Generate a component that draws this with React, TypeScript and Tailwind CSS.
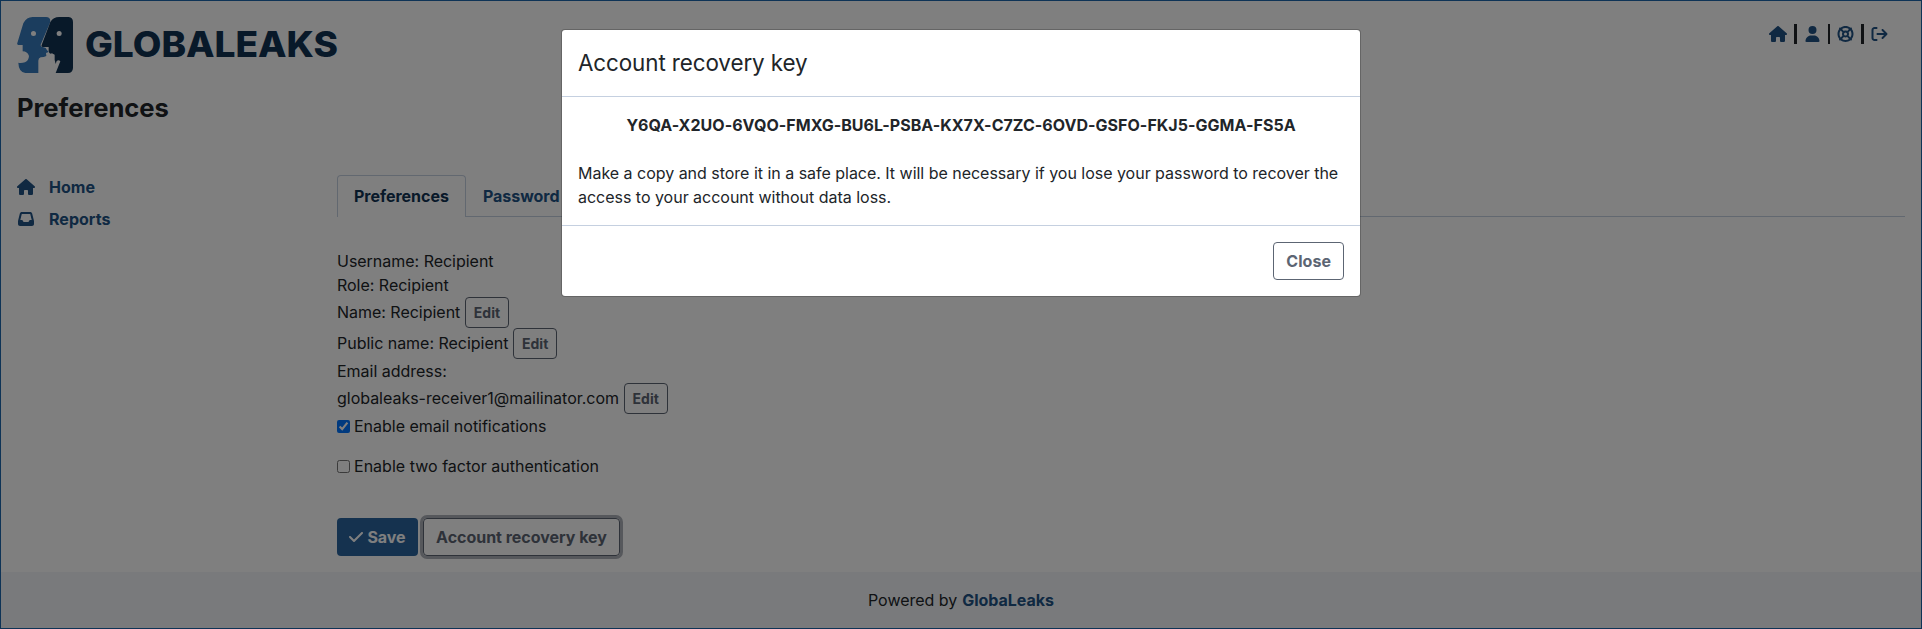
import { FaHouse, FaUser, FaLifeRing, FaArrowRightFromBracket, FaInbox, FaCheck } from "react-icons/fa6";

const link = "text-[#205285]";

function Logo() {
  return (
    <svg width="322" height="58" viewBox="0 0 322 58" className="block">
      <g transform="translate(-7 -7) scale(0.3333)">
        <path fill="#377abc" d="M40 40Q50 21 68 21H108Q124 22 120 38L92 104Q91 110 98 111L107 114Q110 120 116 126L108 129L109 138Q102 142 92 142Q85 144 85 152V189H46Q26 186 25 158Q34 160 45 157Q56 152 57 138Q52 124 38 124V105H25Q20 104 22 99Z" />
        <path fill="#103253" d="M121 36Q130 21 148 21H176Q189 22 189 36V174Q188 189 174 189H137L151 154Q146 148 140 153L137 162L134 150V134L126 130Q118 134 116 124V111H98Q93 110 95 105Z" />
        <circle cx="70.5" cy="70.5" r="7.5" fill="#fff" />
        <circle cx="147.5" cy="70.5" r="7.5" fill="#fff" />
      </g>
      <text x="68" y="40" textLength="253" lengthAdjust="spacingAndGlyphs" fontFamily="Inter" fontWeight="800" fontSize="35" fill="#103253">
        GLOBALEAKS
      </text>
    </svg>
  );
}

function Edit() {
  return (
    <button className="ml-[4.5px] inline-block rounded-[4px] border border-[#5c6573] px-2 py-1 text-sm leading-[21px] font-bold tracking-[0.03px] text-[#5c6573]">
      Edit
    </button>
  );
}

function Bar() {
  return <span className="h-5 w-[2.5px] bg-[#212529]" />;
}

export default function App() {
  return (
    <div className="relative flex h-[629px] flex-col border border-[#1d66ac] bg-white font-['Inter',sans-serif] text-base tracking-[-0.02px] text-[#212529]">
      <header className="flex h-[157px] justify-between px-4 pt-4">
        <div>
          <Logo />
          <h1 className="mt-[15px] text-[25.6px] leading-[36px] font-bold">Preferences</h1>
        </div>
        <div className={"flex h-[34px] items-center gap-[7px] pr-[17.5px] " + link}>
          <FaHouse className="h-4 w-[18px]" />
          <Bar />
          <FaUser className="h-4 w-[17px]" />
          <Bar />
          <FaLifeRing className="h-4 w-[17px]" />
          <Bar />
          <FaArrowRightFromBracket className="h-4 w-[17px]" />
        </div>
      </header>
      <div className="flex flex-1">
        <nav className={"flex w-[320px] flex-col gap-2 px-4 pt-[17px] font-bold tracking-[0.03px] " + link}>
          <a className="flex h-6 items-center gap-[14px]">
            <FaHouse className="h-4 w-[18px]" />
            Home
          </a>
          <a className="flex h-6 items-center gap-[14px]">
            <FaInbox className="h-4 w-[18px]" />
            Reports
          </a>
        </nav>
        <main className="flex-1 pt-[17px] pr-4 pl-4">
          <div className={"flex h-[42px] border-b border-[#c5d0e0] font-bold " + link}>
            <a className="h-[42px] rounded-t-[4px] border border-b-0 border-[#c5d0e0] bg-white px-4 py-2 text-[#103253]">Preferences</a>
            <a className="px-[17px] py-[9px]">Password</a>
          </div>
          <div className="pt-8 leading-6">
            <div>Username: Recipient</div>
            <div>Role: Recipient</div>
            <div>Name: Recipient<Edit /></div>
            <div>Public name: Recipient<Edit /></div>
            <div>Email address:</div>
            <div>globaleaks-receiver1@mailinator.com<Edit /></div>
            <label className="flex items-center gap-1">
              <input type="checkbox" defaultChecked className="h-[13px] w-[13px]" />
              Enable email notifications
            </label>
            <label className="mt-4 flex items-center gap-1 tracking-[0.02px]">
              <input type="checkbox" className="h-[13px] w-[13px]" />
              Enable two factor authentication
            </label>
          </div>
          <div className="mt-10 flex gap-[5px] font-bold">
            <button className="flex h-[38px] w-[81px] items-center justify-center gap-1 rounded-[4px] bg-[#2a659f] text-white">
              <FaCheck className="h-4 w-[14px]" />
              Save
            </button>
            <button className="h-[38px] w-[197px] rounded-[4px] border border-[#5c6573] text-[#5c6573] shadow-[0_0_0_3px_#adb1b8]">
              Account recovery key
            </button>
          </div>
        </main>
      </div>
      <footer className="flex h-14 items-center justify-center gap-[5px] bg-[#f2f5f9]">
        Powered by <span className={"font-bold " + link}>GlobaLeaks</span>
      </footer>
      <div className="absolute -inset-px flex items-start justify-center bg-black/50 pt-[29px]">
        <section className="w-[800px] rounded-[4px] border border-black/20 bg-white bg-clip-padding">
          <h2 className="h-[67px] border-b border-[#c5d0e0] px-4 py-4 text-[22.4px] leading-[34px] tracking-[-0.09px]">Account recovery key</h2>
          <div className="p-4 leading-6">
            <div className="mb-6 text-center font-bold tracking-[0.03px]">Y6QA-X2UO-6VQO-FMXG-BU6L-PSBA-KX7X-C7ZC-6OVD-GSFO-FKJ5-GGMA-FS5A</div>
            <p>Make a copy and store it in a safe place. It will be necessary if you lose your password to recover the access to your account without data loss.</p>
          </div>
          <div className="flex justify-end border-t border-[#c5d0e0] p-4">
            <button className="h-[38px] rounded-[4px] border border-[#5c6573] px-3 font-bold tracking-[0.03px] text-[#5c6573]">Close</button>
          </div>
        </section>
      </div>
    </div>
  );
}
